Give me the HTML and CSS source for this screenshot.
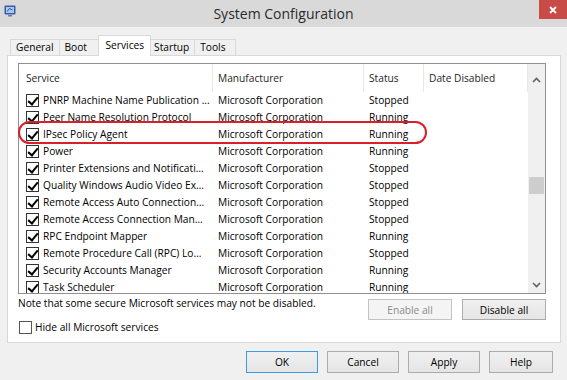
FILE: index.html
```html
<!DOCTYPE html>
<html>
<head>
<meta charset="utf-8">
<link rel="stylesheet" href="styles.css">
</head>
<body>
<div class="titlebar">
  <div class="tb-left">
    <svg class="appicon" width="12" height="12" viewBox="0 0 12 12">
      <rect x="0.5" y="0.5" width="11" height="9" rx="1" fill="#3b5ca8"/>
      <rect x="2" y="2" width="8" height="6" fill="#a9c8ee"/>
      <path d="M3 6.5 L5.5 3.5 L8.5 5" stroke="#2f4f97" stroke-width="1" fill="none"/>
      <rect x="4" y="10" width="4" height="1.5" fill="#6b7fa8"/>
    </svg>
  </div>
  <div class="title">System Configuration</div>
  <div class="tb-right">
    <div class="close">
      <svg width="8" height="8" viewBox="0 0 8 8"><path d="M1 1 L7 7 M7 1 L1 7" stroke="#fff" stroke-width="1.8"/></svg>
    </div>
  </div>
</div>

<div class="content">
  <div class="tabs">
    <div class="tab first">General</div>
    <div class="tab">Boot</div>
    <div class="tab active">Services</div>
    <div class="tab">Startup</div>
    <div class="tab">Tools</div>
  </div>

  <div class="panel">
    <div class="list">
      <div class="list-main">
        <div class="lhead">
          <div class="hc svc-h">Service</div>
          <div class="hc">Manufacturer</div>
          <div class="hc">Status</div>
          <div class="hc">Date Disabled</div>
        </div>
        <div class="lrow"><div class="cell svc"><span class="cb on"></span><span class="name">PNRP Machine Name Publication ...</span></div><div class="cell">Microsoft Corporation</div><div class="cell">Stopped</div><div class="cell"></div></div>
        <div class="lrow"><div class="cell svc"><span class="cb on"></span><span class="name">Peer Name Resolution Protocol</span></div><div class="cell">Microsoft Corporation</div><div class="cell">Running</div><div class="cell"></div></div>
        <div class="lrow"><div class="cell svc"><span class="cb on"></span><span class="name">IPsec Policy Agent</span></div><div class="cell">Microsoft Corporation</div><div class="cell">Running</div><div class="cell"></div></div>
        <div class="lrow"><div class="cell svc"><span class="cb on"></span><span class="name">Power</span></div><div class="cell">Microsoft Corporation</div><div class="cell">Running</div><div class="cell"></div></div>
        <div class="lrow"><div class="cell svc"><span class="cb on"></span><span class="name">Printer Extensions and Notificati…</span></div><div class="cell">Microsoft Corporation</div><div class="cell">Stopped</div><div class="cell"></div></div>
        <div class="lrow"><div class="cell svc"><span class="cb on"></span><span class="name">Quality Windows Audio Video Ex…</span></div><div class="cell">Microsoft Corporation</div><div class="cell">Stopped</div><div class="cell"></div></div>
        <div class="lrow"><div class="cell svc"><span class="cb on"></span><span class="name">Remote Access Auto Connection…</span></div><div class="cell">Microsoft Corporation</div><div class="cell">Stopped</div><div class="cell"></div></div>
        <div class="lrow"><div class="cell svc"><span class="cb on"></span><span class="name">Remote Access Connection Man…</span></div><div class="cell">Microsoft Corporation</div><div class="cell">Stopped</div><div class="cell"></div></div>
        <div class="lrow"><div class="cell svc"><span class="cb on"></span><span class="name">RPC Endpoint Mapper</span></div><div class="cell">Microsoft Corporation</div><div class="cell">Running</div><div class="cell"></div></div>
        <div class="lrow"><div class="cell svc"><span class="cb on"></span><span class="name">Remote Procedure Call (RPC) Lo…</span></div><div class="cell">Microsoft Corporation</div><div class="cell">Stopped</div><div class="cell"></div></div>
        <div class="lrow"><div class="cell svc"><span class="cb on"></span><span class="name">Security Accounts Manager</span></div><div class="cell">Microsoft Corporation</div><div class="cell">Running</div><div class="cell"></div></div>
        <div class="lrow"><div class="cell svc"><span class="cb on"></span><span class="name">Task Scheduler</span></div><div class="cell">Microsoft Corporation</div><div class="cell">Running</div><div class="cell"></div></div>
      </div>
      <div class="sb">
        <div class="sb-btn top"><svg width="9" height="6" viewBox="0 0 9 6"><path d="M1 5 L4.5 1.5 L8 5" stroke="#606060" stroke-width="1.6" fill="none"/></svg></div>
        <div class="sb-track"><div class="sb-thumb"></div></div>
        <div class="sb-btn"><svg width="9" height="6" viewBox="0 0 9 6"><path d="M1 1 L4.5 4.5 L8 1" stroke="#606060" stroke-width="1.6" fill="none"/></svg></div>
      </div>
      <div class="highlight"></div>
    </div>

    <div class="actions">
      <div class="actions-left">
        <div class="note">Note that some secure Microsoft services may not be disabled.</div>
        <div class="hide"><span class="cb"></span><span>Hide all Microsoft services</span></div>
      </div>
      <div class="pair">
        <div class="btn disabled">Enable all</div>
        <div class="btn">Disable all</div>
      </div>
    </div>
  </div>

  <div class="footer">
    <div class="btn fbtn default">OK</div>
    <div class="btn fbtn">Cancel</div>
    <div class="btn fbtn">Apply</div>
    <div class="btn fbtn help">Help</div>
  </div>
</div>
</body>
</html>
```

FILE: styles.css
```css
* { box-sizing: border-box; }
html, body { margin: 0; padding: 0; }
body {
  width: 567px;
  height: 380px;
  overflow: hidden;
  background: #f0f0f0;
  font-family: "Open Sans", "Noto Sans", sans-serif;
  font-size: 10.2px;
  color: #000;
}

/* title bar */
.titlebar {
  height: 27px;
  background: #d9d9d9;
  display: grid;
  grid-template-columns: 1fr auto 1fr;
  align-items: start;
}
.appicon { display: block; margin: 5px 0 0 4px; }
.title { font-size: 14px; line-height: 27px; color: #2b2b2b; }
.tb-right { display: flex; justify-content: flex-end; }
.close {
  width: 28px;
  height: 19px;
  background: #c84b48;
  display: flex;
  align-items: center;
  justify-content: center;
}

/* content */
.content { padding: 8px 6px 0 7px; }

.tabs {
  display: flex;
  align-items: flex-end;
  height: 20px;
  padding-left: 3px;
}
.tab {
  height: 16px;
  min-width: 41px;
  padding: 0 5px;
  line-height: 15px;
  background: #f0f0f0;
  border-top: 1px solid #d9d9d9;
  border-right: 1px solid #d9d9d9;
  color: #000;
}
.tab.first { border-left: 1px solid #d9d9d9; }
.tab.active {
  position: relative;
  z-index: 2;
  height: 21px;
  margin: 0 -2px -1px -3px;
  padding: 0 6px 0 7px;
  line-height: 18px;
  background: #fff;
  border-left: 1px solid #d9d9d9;
}

.panel {
  background: #fff;
  border: 1px solid #d9d9d9;
  padding: 7px 14px 8px 10px;
}

.list {
  position: relative;
  height: 231px;
  border: 1px solid #8e9093;
  display: flex;
}
.list-main { flex: 1; overflow: hidden; background: #fff; }
.lhead, .lrow {
  display: grid;
  grid-template-columns: 194px 151px 60px 104px;
}
.lhead { height: 28px; }
.hc {
  line-height: 28px;
  padding-left: 5px;
  border-right: 1px solid #e8e8e8;
  color: #1e1e1e;
  white-space: nowrap;
  overflow: hidden;
}
.hc.svc-h { padding-left: 7px; }
.lrow { height: 17px; }
.cell {
  line-height: 17px;
  padding-left: 5px;
  white-space: nowrap;
  overflow: hidden;
}
.cell.svc {
  display: flex;
  align-items: center;
  gap: 4px;
  padding-left: 7px;
}
.name { overflow: hidden; }

.cb {
  flex: none;
  display: inline-block;
  width: 13px;
  height: 13px;
  border: 1px solid #333;
  background: #fff;
  position: relative;
}
.cb.on::after {
  content: "";
  position: absolute;
  left: 3px;
  top: 0px;
  width: 4px;
  height: 8px;
  border-right: 2px solid #000;
  border-bottom: 2px solid #000;
  transform: rotate(40deg);
}

.sb {
  width: 17px;
  background: #f0f0f0;
  display: flex;
  flex-direction: column;
}
.sb-btn {
  height: 17px;
  display: flex;
  align-items: center;
  justify-content: center;
}
.sb-btn.top { height: 22px; align-items: flex-end; padding-bottom: 3px; }
.sb-btn svg { display: block; }
.sb-track { flex: 1; padding: 0 1px; }
.sb-thumb {
  margin-top: 91px;
  height: 17px;
  background: #cdcdcd;
}

.highlight {
  position: absolute;
  left: -1px;
  top: 57px;
  width: 409px;
  height: 23px;
  border: 2px solid #d9202a;
  border-radius: 12px;
  pointer-events: none;
}

.actions {
  display: flex;
  justify-content: space-between;
  margin-top: 5px;
}
.note { line-height: 12px; margin-top: -2px; }
.hide {
  margin-top: 11px;
  display: flex;
  align-items: center;
  gap: 3px;
  height: 14px;
  padding-left: 1px;
}
.hide .cb { border-color: #555; }
.pair { display: flex; gap: 10px; }

.btn {
  height: 21px;
  width: 84px;
  border: 1px solid #acacac;
  background: linear-gradient(#f0f0f0, #e5e5e5);
  display: flex;
  align-items: center;
  justify-content: center;
  color: #000;
}
.btn.disabled {
  background: #f4f4f4;
  border-color: #c3c3c3;
  color: #8a8a8a;
}

.footer {
  display: flex;
  justify-content: flex-end;
  gap: 9px;
  margin-top: 8px;
  padding-right: 8px;
}
.fbtn { width: 72px; height: 22px; }
.fbtn.help { width: 64px; }
.fbtn.default { border-color: #3c9be2; }
```
